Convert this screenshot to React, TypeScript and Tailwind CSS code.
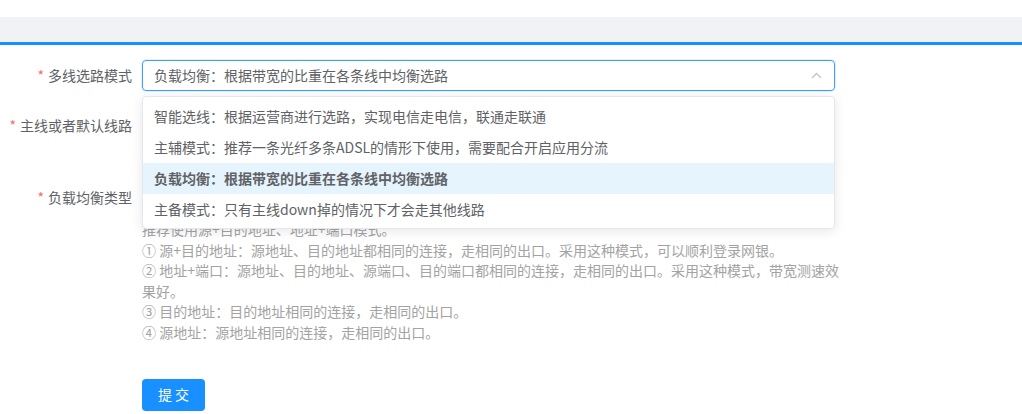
import React from 'react';

const options = [
  '智能选线：根据运营商进行选路，实现电信走电信，联通走联通',
  '主辅模式：推荐一条光纤多条ADSL的情形下使用，需要配合开启应用分流',
  '负载均衡：根据带宽的比重在各条线中均衡选路',
  '主备模式：只有主线down掉的情况下才会走其他线路',
];

const hints = [
  '推荐使用源+目的地址、地址+端口模式。',
  '① 源+目的地址：源地址、目的地址都相同的连接，走相同的出口。采用这种模式，可以顺利登录网银。',
  '② 地址+端口：源地址、目的地址、源端口、目的端口都相同的连接，走相同的出口。采用这种模式，带宽测速效果好。',
  '③ 目的地址：目的地址相同的连接，走相同的出口。',
  '④ 源地址：源地址相同的连接，走相同的出口。',
];

function Label({ text }: { text: string }) {
  return (
    <div className="w-[142px] shrink-0 pr-[10px] flex justify-end items-center h-[31px] text-[14px] text-[#606266]">
      <span className="text-[#f56c6c] mr-[4px]">*</span>
      {text}
    </div>
  );
}

export default function App() {
  const [selected, setSelected] = React.useState(2);

  return (
    <div className="w-full h-[414px] overflow-hidden bg-white font-['Noto_Sans_CJK_SC',sans-serif]">
      <div className="h-[17px]" />
      <div className="h-[28px] bg-[#f0f2f5] border-b-[3px] border-[#1890ff]" />

      <div className="flex flex-col">
        {/* 多线选路模式 */}
        <div className="flex mt-[15px]">
          <Label text="多线选路模式" />
          <div className="relative w-[693px]">
            <div className="h-[31px] border border-[#409eff] rounded-[4px] shadow-[0_0_0_1px_rgba(64,158,255,0.15)] flex items-center justify-between pl-[11px] pr-[12px] text-[14px] text-[#606266]">
              <span>{options[selected]}</span>
              <svg width="11" height="7" viewBox="0 0 11 7" fill="none">
                <path d="M1 6L5.5 1.5L10 6" stroke="#c0c4cc" strokeWidth="1.3" />
              </svg>
            </div>
            <div className="absolute left-0 top-[36px] w-[693px] z-10 bg-white border border-[#e4e7ed] rounded-[4px] shadow-[0_2px_12px_rgba(0,0,0,0.1)] pt-[4px] pb-[3px]">
              {options.map((opt, i) => (
                <div
                  key={opt}
                  onClick={() => setSelected(i)}
                  className={
                    i === selected
                      ? 'h-[31px] flex items-center px-[11px] text-[14px] bg-[#e6f4fd] text-[#606266] font-bold'
                      : 'h-[31px] flex items-center px-[11px] text-[14px] text-[#606266]'
                  }
                >
                  {opt}
                </div>
              ))}
            </div>
          </div>
        </div>

        {/* 主线或者默认线路 */}
        <div className="flex mt-[19px]">
          <Label text="主线或者默认线路" />
          <div className="w-[693px] h-[31px] border border-[#dcdfe6] rounded-[4px]" />
        </div>

        {/* 负载均衡类型 */}
        <div className="flex mt-[41px]">
          <Label text="负载均衡类型" />
          <div className="w-[693px] h-[31px]" />
        </div>
        <div className="flex">
          <div className="w-[142px] shrink-0" />
          <div className="w-[700px] mt-[6px] text-[14px] leading-[20.6px] text-[#a3a3a3]">
            {hints.map(h => (
              <div key={h}>{h}</div>
            ))}
          </div>
        </div>

        <div className="flex mt-[36px]">
          <div className="w-[142px] shrink-0" />
          <button className="w-[63px] h-[32px] rounded-[4px] bg-[#1890ff] text-white text-[14px] flex items-center justify-center">
            提 交
          </button>
        </div>
      </div>
    </div>
  );
}
